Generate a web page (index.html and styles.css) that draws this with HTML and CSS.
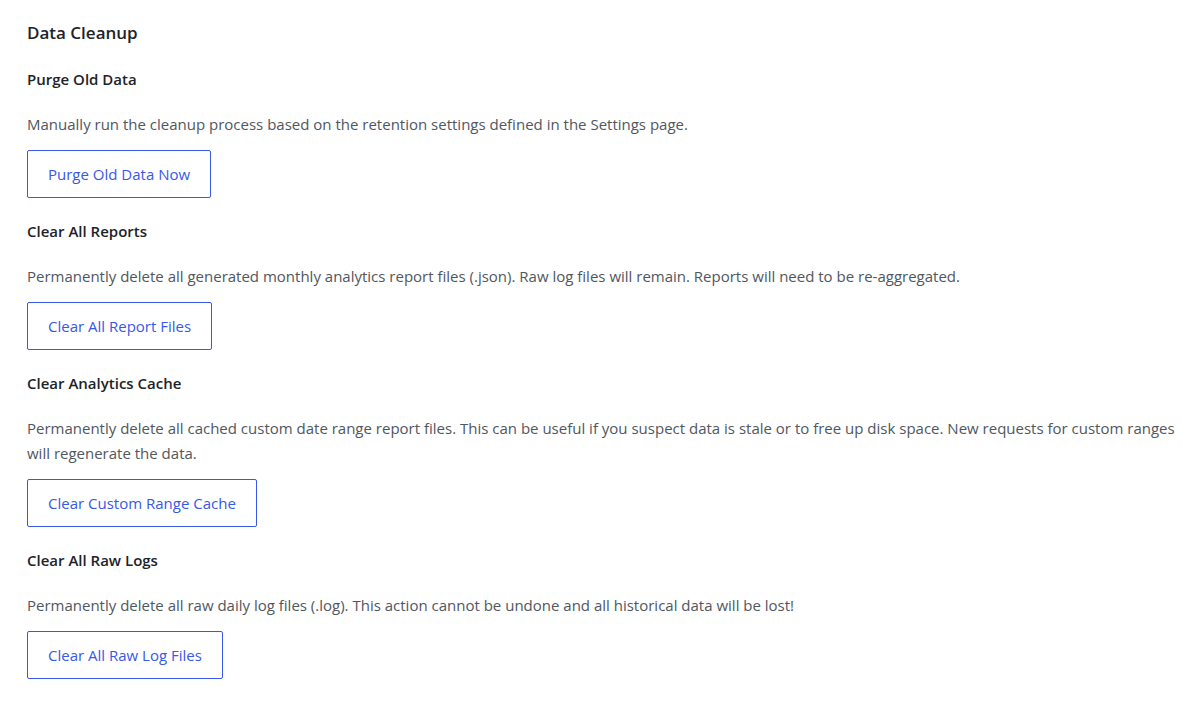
FILE: index.html
```html
<!DOCTYPE html>
<html lang="en">
<head>
  <meta charset="UTF-8">
  <meta name="viewport" content="width=device-width, initial-scale=1.0">
  <title>Data Cleanup</title>
  <link rel="stylesheet" href="styles.css">
</head>
<body>

<div class="wrap">
  <h2 class="page-title">Data Cleanup</h2>

  <div class="cleanup-section">
    <h3>Purge Old Data</h3>
    <p>Manually run the cleanup process based on the retention settings defined in the Settings page.</p>
    <button type="button" class="btn-outline">Purge Old Data Now</button>
  </div>

  <div class="cleanup-section">
    <h3>Clear All Reports</h3>
    <p>Permanently delete all generated monthly analytics report files (.json). Raw log files will remain. Reports will need to be re-aggregated.</p>
    <button type="button" class="btn-outline">Clear All Report Files</button>
  </div>

  <div class="cleanup-section">
    <h3>Clear Analytics Cache</h3>
    <p>Permanently delete all cached custom date range report files. This can be useful if you suspect data is stale or to free up disk space. New requests for custom ranges will regenerate the data.</p>
    <button type="button" class="btn-outline">Clear Custom Range Cache</button>
  </div>

  <div class="cleanup-section">
    <h3>Clear All Raw Logs</h3>
    <p>Permanently delete all raw daily log files (.log). This action cannot be undone and all historical data will be lost!</p>
    <button type="button" class="btn-outline">Clear All Raw Log Files</button>
  </div>
</div>

</body>
</html>
```
FILE: styles.css
```css
body {
  font-family: 'Open Sans', 'Noto Sans', sans-serif;
  margin: 0;
  padding: 0;
  background: #fff;
  color: #1d2327;
}
.wrap {
  padding: 21px 20px 21px 27px;
}
.page-title {
  margin: 0 0 23px;
  font-size: 17px;
  line-height: 24px;
  font-weight: 600;
}
.cleanup-section {
  margin-bottom: 22px;
}
.cleanup-section h3 {
  margin: 0;
  font-size: 15px;
  line-height: 22px;
  font-weight: 600;
}
.cleanup-section p {
  margin: 22px 0 13px;
  font-size: 15px;
  line-height: 25px;
  color: #50575e;
}
.btn-outline {
  font-family: inherit;
  font-size: 15px;
  line-height: 22px;
  padding: 12px 20px;
  background: #fff;
  color: #3858e9;
  border: 1px solid #3858e9;
  border-radius: 2px;
  cursor: pointer;
}
```
